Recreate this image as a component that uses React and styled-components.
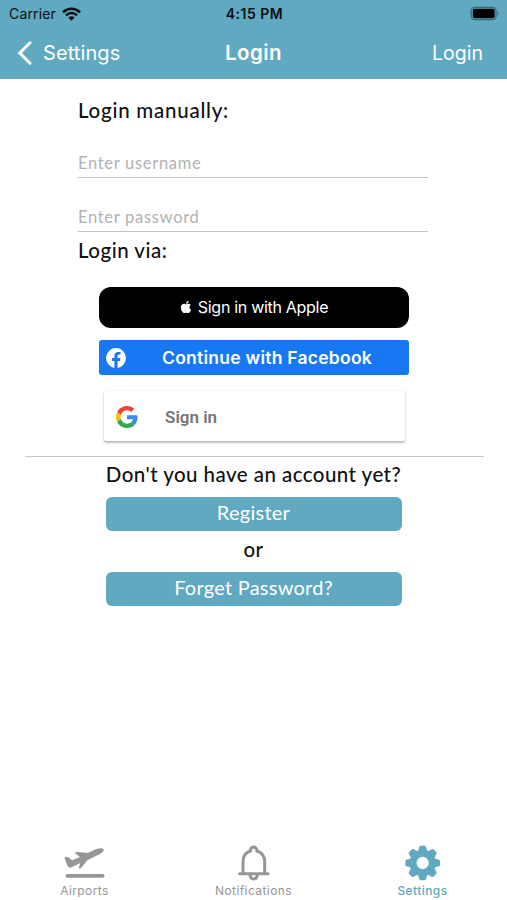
import React from 'react'
import styled, { createGlobalStyle } from 'styled-components'
import { FaApple } from 'react-icons/fa'

const BLUE = '#61a8c1'
const GREY = '#969696'

const GlobalStyle = createGlobalStyle`
  * {
    box-sizing: border-box;
  }
  body {
    margin: 0;
    background: #fff;
    font-family: Lato, sans-serif;
  }
`

const Screen = styled.div`
  display: flex;
  flex-direction: column;
  height: 900px;
  width: 507px;
  overflow: hidden;
`

const Header = styled.header`
  height: 79px;
  background: ${BLUE};
  font-family: Inter, sans-serif;
`

const StatusBar = styled.div`
  display: grid;
  grid-template-columns: 1fr auto 1fr;
  align-items: center;
  height: 27px;
  padding: 0 7px 0 9px;
  color: #0b1114;
`

const Carrier = styled.div`
  display: flex;
  align-items: center;
  gap: 6px;
  font-size: 14px;
  letter-spacing: 0.15px;
`

const Clock = styled.div`
  font-size: 14px;
  font-weight: 600;
  letter-spacing: 0.5px;
`

const BatteryIcon = styled.svg`
  justify-self: end;
`

const NavBar = styled.div`
  display: grid;
  grid-template-columns: 1fr auto 1fr;
  align-items: center;
  height: 51px;
  padding: 0 24px 0 24px;
  color: #fff;
`

const BackButton = styled.div`
  display: flex;
  align-items: center;
  gap: 11px;
  margin-left: -7px;
  font-size: 20px;
  letter-spacing: 0.1px;
`

const NavTitle = styled.div`
  font-size: 20.5px;
  font-weight: 600;
  letter-spacing: 0.4px;
`

const NavAction = styled.div`
  justify-self: end;
  font-size: 19.5px;
`

const Content = styled.main`
  display: flex;
  flex-direction: column;
  flex: 1;
`

const LoginForm = styled.form`
  display: flex;
  flex-direction: column;
  margin: 17px 79px 0 78px;
`

const Label = styled.div`
  height: 28px;
  margin-top: ${(props) => props.$top || 0};
  line-height: 28px;
  font-size: 20.5px;
  font-weight: 500;
  letter-spacing: ${(props) => props.$spacing || '0.5px'};
  color: #111;
  white-space: nowrap;
`

const TextInput = styled.input`
  height: 32px;
  margin: 22px 0 0;
  padding: 2px 0 0;
  border: 0;
  border-bottom: 1px solid #c4c4c4;
  border-radius: 0;
  background: transparent;
  font-family: Lato, sans-serif;
  font-size: 16.5px;
  letter-spacing: 0.7px;
  outline: none;

  &::placeholder {
    color: #b2b2b2;
    opacity: 1;
  }
`

const SocialButtons = styled.div`
  display: flex;
  flex-direction: column;
  margin: 23px 98px 0 99px;
`

const AppleButton = styled.button`
  display: flex;
  align-items: center;
  justify-content: center;
  gap: 5px;
  height: 41px;
  padding: 0 1px 1px 0;
  border: 0;
  border-radius: 12px;
  background: #000;
  color: #fff;
  font-family: Inter, sans-serif;
  font-size: 16px;
  letter-spacing: -0.3px;
`

const FacebookButton = styled.button`
  display: flex;
  align-items: center;
  height: 35px;
  margin-top: 12px;
  padding: 0 0 0 7px;
  border: 0;
  border-radius: 3px;
  background: #1877f2;
  color: #fff;
  font-family: Inter, sans-serif;
  font-size: 17.5px;
  font-weight: 600;
`

const FacebookText = styled.span`
  margin-left: 36px;
  letter-spacing: 0.25px;
  white-space: nowrap;
`

const GoogleButton = styled.button`
  display: flex;
  align-items: center;
  gap: 27px;
  height: 50px;
  margin: 16px 4px 0 5px;
  padding: 2px 0 0 12px;
  border: 0;
  border-radius: 2px;
  background: #fff;
  box-shadow: 0 2px 2px rgba(0, 0, 0, 0.24), 0 0 2px rgba(0, 0, 0, 0.14);
  color: #757575;
  font-family: Roboto, sans-serif;
  font-size: 17px;
  font-weight: 600;
`

const Divider = styled.hr`
  width: 459px;
  height: 1px;
  margin: 15px 0 0 25px;
  border: 0;
  background: #c9c9c9;
`

const AccountSection = styled.section`
  display: flex;
  flex-direction: column;
  align-items: center;
  padding-top: 3px;
`

const ActionButton = styled.button`
  width: 296px;
  height: 34px;
  margin: ${(props) => props.$margin};
  padding: 0 0 5px;
  border: 0;
  border-radius: 6px;
  background: ${BLUE};
  color: #fff;
  font-family: Lato, sans-serif;
  font-size: 20px;
  letter-spacing: 0.25px;
`

const TabBar = styled.nav`
  display: grid;
  grid-template-columns: repeat(3, 1fr);
  height: 58px;
`

const Tab = styled.div`
  display: flex;
  flex-direction: column;
  align-items: center;
  color: ${(props) => (props.$active ? BLUE : GREY)};
  font-family: Inter, sans-serif;
  font-size: 12px;
  font-weight: ${(props) => (props.$active ? 500 : 400)};
  letter-spacing: 0.42px;
`

const TabLabel = styled.span`
  margin-top: -1px;
  line-height: 16px;
`

const WifiIcon = () => (
  <svg width="19" height="14" viewBox="0 0 19 14" fill="none" stroke="currentColor">
    <path d="M1 5.2a12.2 12.2 0 0 1 17 0" strokeWidth="2.7" />
    <path d="M4 8.3a8 8 0 0 1 11 0" strokeWidth="2.5" />
    <path d="M9.5 13.7 6.4 10.6a4.5 4.5 0 0 1 6.2 0z" fill="currentColor" stroke="none" />
  </svg>
)

const Battery = () => (
  <BatteryIcon width="30" height="16" viewBox="0 0 30 16">
    <rect x="1.3" y="1.3" width="24.8" height="12.4" rx="3.6" fill="none" stroke="#386879" strokeWidth="1.3" />
    <rect x="2.8" y="2.8" width="21.8" height="9.4" rx="1.8" fill="#000" />
    <path d="M27.6 5.2q2.4 2.3 0 4.6z" fill="#386879" />
  </BatteryIcon>
)

const BackIcon = () => (
  <svg width="15" height="24" viewBox="0 0 15 24" fill="none">
    <path d="M13 1.8 2.8 12 13 22.2" stroke="#fff" strokeWidth="3" strokeLinecap="round" />
  </svg>
)

const FacebookIcon = () => (
  <svg width="20" height="20" viewBox="0 0 24 24">
    <path
      fill="#fff"
      d="M24 12a12 12 0 1 0-13.9 11.9v-8.4H7.1V12h3V9.4c0-3 1.8-4.7 4.6-4.7 1.3 0 2.7.2 2.7.2v3h-1.5c-1.5 0-2 .9-2 1.9V12h3.4l-.5 3.5h-2.9v8.4A12 12 0 0 0 24 12z"
    />
  </svg>
)

const GoogleIcon = () => (
  <svg width="22" height="22" viewBox="0 0 48 48">
    <path fill="#EA4335" d="M24 9.5c3.54 0 6.71 1.22 9.21 3.6l6.85-6.85C35.9 2.38 30.47 0 24 0 14.62 0 6.51 5.38 2.56 13.22l7.98 6.19C12.43 13.72 17.74 9.5 24 9.5z" />
    <path fill="#4285F4" d="M46.98 24.55c0-1.57-.15-3.09-.38-4.55H24v9.02h12.94c-.58 2.96-2.26 5.48-4.78 7.18l7.73 6c4.51-4.18 7.09-10.36 7.09-17.65z" />
    <path fill="#FBBC05" d="M10.53 28.59A14.5 14.5 0 0 1 9.77 24c0-1.6.27-3.14.76-4.59l-7.98-6.19A23.99 23.99 0 0 0 0 24c0 3.88.92 7.54 2.56 10.78l7.97-6.19z" />
    <path fill="#34A853" d="M24 48c6.48 0 11.93-2.13 15.89-5.81l-7.73-6c-2.15 1.45-4.92 2.3-8.16 2.3-6.26 0-11.57-4.22-13.47-9.91l-7.98 6.19C6.51 42.62 14.62 48 24 48z" />
  </svg>
)

const AirportIcon = () => (
  <svg width="42" height="42" viewBox="74 21 126 126" fill="currentColor">
    <path d="M75 68q5-4 12-1l11 9 24-10-15-11q3-5 9-4l29 3 24-11q18-6 24 0 2 7-11 14l-38 19-17 21q-5 5-9 3l5-16-26 13q-8 3-12-3z" />
    <rect x="79" y="117" width="116" height="11" rx="4" />
  </svg>
)

const BellIcon = () => (
  <svg width="42" height="42" viewBox="98 21 126 126" fill="none" stroke="currentColor" strokeWidth="9" strokeLinecap="round">
    <path d="M128 115V81c0-18 9-29 22-33 0-16 20-16 20 0 13 4 23 15 23 33v34" />
    <path d="M118 116h85" />
    <path d="M149 120c1 16 21 16 22 0" />
  </svg>
)

const GearIcon = () => (
  <svg width="42" height="42" viewBox="-62 -63 126 126">
    <circle r="29" fill="none" stroke="currentColor" strokeWidth="21" />
    {[0, 45, 90, 135, 180, 225, 270, 315].map((angle) => (
      <path
        key={angle}
        d="M-10-34-6-48H6L10-34z"
        fill="currentColor"
        stroke="currentColor"
        strokeWidth="8"
        strokeLinejoin="round"
        transform={`rotate(${angle})`}
      />
    ))}
  </svg>
)

class App extends React.PureComponent {
  onSubmitForm = (e) => {
    e.preventDefault()
  }

  render() {
    return (
      <Screen>
        <GlobalStyle />
        <Header>
          <StatusBar>
            <Carrier>
              Carrier
              <WifiIcon />
            </Carrier>
            <Clock>4:15 PM</Clock>
            <Battery />
          </StatusBar>
          <NavBar>
            <BackButton>
              <BackIcon />
              Settings
            </BackButton>
            <NavTitle>Login</NavTitle>
            <NavAction>Login</NavAction>
          </NavBar>
        </Header>
        <Content>
          <LoginForm onSubmit={this.onSubmitForm}>
            <Label $spacing="0.75px">Login manually:</Label>
            <TextInput placeholder="Enter username" />
            <TextInput placeholder="Enter password" type="password" />
            <Label $top="4px">Login via:</Label>
          </LoginForm>
          <SocialButtons>
            <AppleButton>
              <FaApple size={14} />
              Sign in with Apple
            </AppleButton>
            <FacebookButton>
              <FacebookIcon />
              <FacebookText>Continue with Facebook</FacebookText>
            </FacebookButton>
            <GoogleButton>
              <GoogleIcon />
              Sign in
            </GoogleButton>
          </SocialButtons>
          <Divider />
          <AccountSection>
            <Label $spacing="0.45px">Don't you have an account yet?</Label>
            <ActionButton $margin="9px 0 4px">Register</ActionButton>
            <Label>or</Label>
            <ActionButton $margin="9px 0 0">Forget Password?</ActionButton>
          </AccountSection>
        </Content>
        <TabBar>
          <Tab>
            <AirportIcon />
            <TabLabel>Airports</TabLabel>
          </Tab>
          <Tab>
            <BellIcon />
            <TabLabel>Notifications</TabLabel>
          </Tab>
          <Tab $active>
            <GearIcon />
            <TabLabel>Settings</TabLabel>
          </Tab>
        </TabBar>
      </Screen>
    )
  }
}

export default App
